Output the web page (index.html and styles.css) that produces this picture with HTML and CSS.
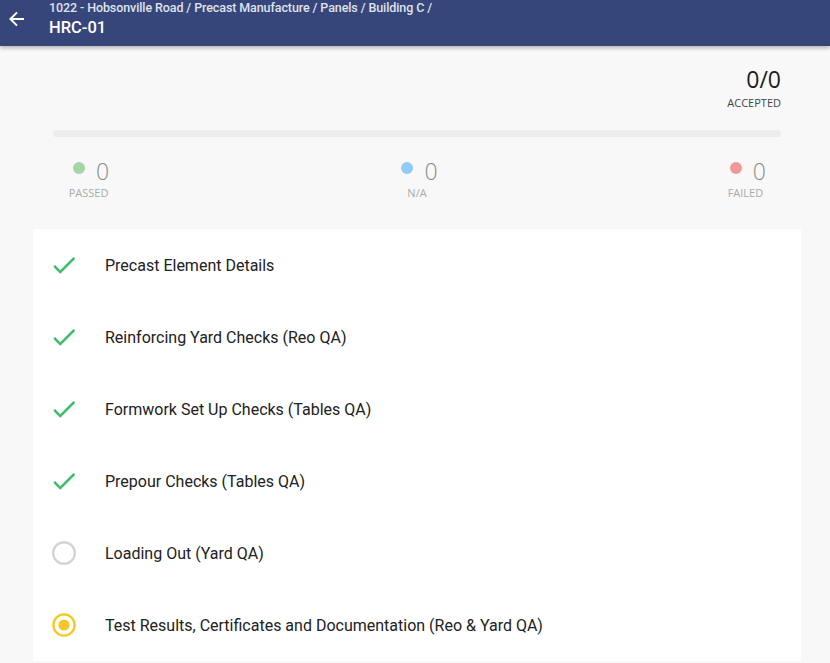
FILE: index.html
```html
<!DOCTYPE html>
<html>
<head>
<meta charset="utf-8">
<link rel="stylesheet" href="styles.css">
</head>
<body>
<header class="topbar">
  <button class="back" aria-label="Back">
    <svg width="16" height="16" viewBox="0 0 16 16"><path d="M15 7H3.83l4.88-4.88L7.3.7 0 8l7.3 7.3 1.41-1.41L3.83 9H15z" fill="#fff"/></svg>
  </button>
  <div class="titles">
    <div class="crumbs">1022 - Hobsonville Road / Precast Manufacture / Panels / Building C /</div>
    <div class="title">HRC-01</div>
  </div>
</header>
<main class="content">
  <section class="summary">
    <div class="accepted">
      <div class="acc-num">0/0</div>
      <div class="acc-label">ACCEPTED</div>
    </div>
    <div class="progress"></div>
    <div class="stats">
      <div class="stat">
        <div class="stat-row"><span class="dot green"></span><span class="stat-num">0</span></div>
        <div class="stat-label">PASSED</div>
      </div>
      <div class="stat">
        <div class="stat-row"><span class="dot blue"></span><span class="stat-num">0</span></div>
        <div class="stat-label">N/A</div>
      </div>
      <div class="stat">
        <div class="stat-row"><span class="dot red"></span><span class="stat-num">0</span></div>
        <div class="stat-label">FAILED</div>
      </div>
    </div>
  </section>
  <ul class="list">
    <li class="item"><span class="icon"><svg width="30" height="30" viewBox="0 0 24 24"><path d="M9 16.17L4.83 12l-1.42 1.41L9 19 21 7l-1.41-1.41z" fill="#3dba6a"/></svg></span><span class="label">Precast Element Details</span></li>
    <li class="item"><span class="icon"><svg width="30" height="30" viewBox="0 0 24 24"><path d="M9 16.17L4.83 12l-1.42 1.41L9 19 21 7l-1.41-1.41z" fill="#3dba6a"/></svg></span><span class="label">Reinforcing Yard Checks (Reo QA)</span></li>
    <li class="item"><span class="icon"><svg width="30" height="30" viewBox="0 0 24 24"><path d="M9 16.17L4.83 12l-1.42 1.41L9 19 21 7l-1.41-1.41z" fill="#3dba6a"/></svg></span><span class="label">Formwork Set Up Checks (Tables QA)</span></li>
    <li class="item"><span class="icon"><svg width="30" height="30" viewBox="0 0 24 24"><path d="M9 16.17L4.83 12l-1.42 1.41L9 19 21 7l-1.41-1.41z" fill="#3dba6a"/></svg></span><span class="label">Prepour Checks (Tables QA)</span></li>
    <li class="item"><span class="icon"><svg width="26" height="26" viewBox="0 0 26 26"><circle cx="13" cy="13" r="10.8" fill="none" stroke="#d4d4d4" stroke-width="2.4"/></svg></span><span class="label">Loading Out (Yard QA)</span></li>
    <li class="item"><span class="icon"><svg width="26" height="26" viewBox="0 0 26 26"><circle cx="13" cy="13" r="10.6" fill="none" stroke="#f5c828" stroke-width="2.4"/><circle cx="13" cy="13" r="5.6" fill="#f5c828"/></svg></span><span class="label">Test Results, Certificates and Documentation (Reo &amp; Yard QA)</span></li>
  </ul>
</main>
</body>
</html>
```
FILE: styles.css
```css
* { box-sizing: border-box; }
html, body { margin: 0; padding: 0; }
body {
  background: #f8f8f8;
  font-family: Roboto, "Liberation Sans", sans-serif;
  width: 830px;
  height: 663px;
  overflow: hidden;
}
.topbar {
  height: 46px;
  background: #37467a;
  display: flex;
  align-items: flex-start;
  box-shadow: 0 2px 4px rgba(0,0,0,0.28);
  position: relative;
  z-index: 2;
}
.back {
  width: 49px;
  height: 37px;
  border: 0;
  background: transparent;
  padding: 0 0 0 9px;
  display: flex;
  align-items: center;
  cursor: pointer;
}
.titles { padding-top: 1px; }
.crumbs {
  color: #dfe2ec;
  font-size: 12.5px;
  font-weight: 500;
  line-height: 14px;
  letter-spacing: -0.1px;
}
.title {
  color: #fff;
  font-size: 16.5px;
  font-weight: 500;
  line-height: 22px;
  margin-top: 2px;
}
.content {
  margin-left: 33px;
  width: 768px;
}
.summary {
  padding: 19px 20px 0 20px;
  font-family: "Open Sans", "Liberation Sans", sans-serif;
  height: 183px;
}
.accepted {
  display: flex;
  flex-direction: column;
  align-items: flex-end;
}
.acc-num {
  font-size: 23px;
  line-height: 28px;
  color: #1c1c1c;
  font-weight: 400;
}
.acc-label {
  font-size: 11px;
  line-height: 14px;
  color: #444;
  margin-top: 3px;
}
.progress {
  height: 7px;
  border-radius: 4px;
  background: #ececec;
  margin-top: 20px;
}
.stats {
  display: flex;
  justify-content: space-between;
  padding: 0 15px;
  margin-top: 21px;
}
.stat {
  display: flex;
  flex-direction: column;
  align-items: center;
}
.stat-row {
  display: flex;
  align-items: center;
  height: 26px;
  padding-left: 5px;
}
.dot {
  width: 12px;
  height: 12px;
  border-radius: 50%;
  margin-right: 11px;
  margin-top: -6px;
}
.green { background: #a5d6a7; }
.blue { background: #90caf9; }
.red { background: #ef9a9a; }
.stat-num {
  font-size: 23px;
  font-weight: 300;
  color: #8c8c8c;
  line-height: 26px;
}
.stat-label {
  font-size: 11px;
  line-height: 14px;
  color: #aaa;
  margin-top: 2px;
}
.list {
  list-style: none;
  margin: 0;
  padding: 0;
  background: #fff;
}
.item {
  height: 72px;
  display: flex;
  align-items: center;
  padding-left: 16px;
}
.icon {
  width: 30px;
  height: 30px;
  display: flex;
  align-items: center;
  justify-content: center;
  margin-right: 26px;
}
.label {
  font-size: 16px;
  color: #212121;
}
```
